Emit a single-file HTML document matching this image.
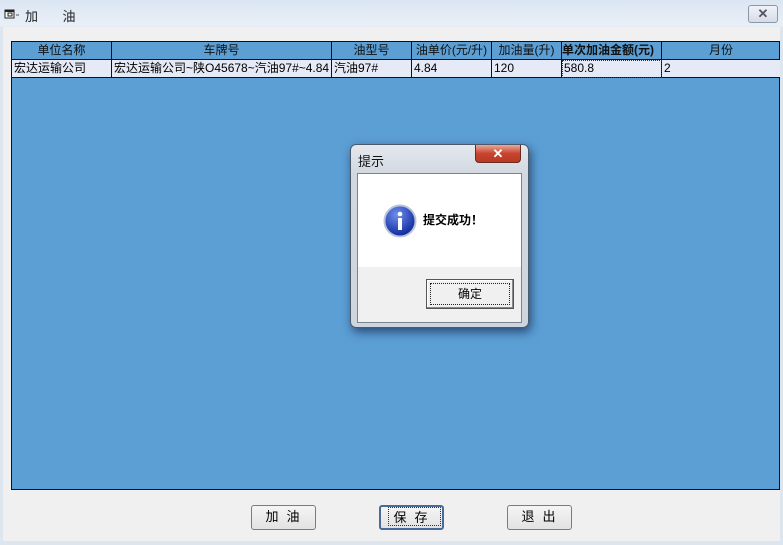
<!DOCTYPE html>
<html><head><meta charset="utf-8"><style>
*{margin:0;padding:0;box-sizing:border-box}
body{width:783px;height:545px;overflow:hidden;background:#f0f0f0;font-family:"Liberation Sans","Noto Sans CJK SC",sans-serif;font-size:12px;position:relative;color:#000}
.abs{position:absolute}
#title{left:0;top:0;width:783px;height:27px;background:linear-gradient(#dbe6f3,#e9eff7);border-bottom:1px solid #e6ebf1}
#grid{left:11px;top:41px;width:769px;height:449px;background:#5b9fd5;border:1px solid #111}
.hc{position:absolute;top:0;height:18px;line-height:17px;text-align:center;border-right:1px solid #111;border-bottom:1px solid #111;color:#111;font-size:12px}
.dc{position:absolute;top:18px;height:18px;line-height:17px;padding-left:2px;background:#e6eaf6;border-right:1px solid #111;border-bottom:1px solid #111;font-size:12px;white-space:nowrap;overflow:hidden}
.btn{position:absolute;top:505px;width:65px;height:25px;border:1px solid #6f7f8f;border-radius:3px;background:linear-gradient(#f5f5f5,#e2e2e2);text-align:center;line-height:22px;font-size:13px;letter-spacing:8px;padding-left:6px}
</style></head><body>
<div id="title" class="abs">
 <svg class="abs" style="left:4px;top:8px" width="18" height="14"><rect x="1" y="2" width="9" height="8" fill="#fff" stroke="#222"/><rect x="1" y="2" width="9" height="2" fill="#222"/><rect x="4" y="5" width="4" height="3" fill="none" stroke="#222"/><path d="M12 7h3" stroke="#555"/></svg>
 <div class="abs" style="left:25px;top:6px;font-size:13px;color:#222;letter-spacing:2px">加&nbsp;&nbsp;&nbsp;&nbsp;油</div>
 <div class="abs" style="left:748px;top:5px;width:30px;height:18px;border:1px solid #8a97a8;border-radius:3px;background:linear-gradient(#f0f3f8,#d6dde7);text-align:center;line-height:15px;color:#556;font-size:13px;font-weight:bold">✕</div>
</div>
<div class="abs" style="left:0;top:27px;width:3px;height:518px;background:#dde5ee"></div>
<div class="abs" style="left:780px;top:27px;width:3px;height:518px;background:#dde5ee"></div>
<div class="abs" style="left:0;top:541px;width:783px;height:4px;background:#dde5ee"></div>
<div id="grid" class="abs">
 <div class="hc" style="left:0;width:100px">单位名称</div>
 <div class="hc" style="left:100px;width:220px">车牌号</div>
 <div class="hc" style="left:320px;width:80px">油型号</div>
 <div class="hc" style="left:400px;width:80px">油单价(元/升)</div>
 <div class="hc" style="left:480px;width:70px">加油量(升)</div>
 <div class="hc" style="left:550px;width:100px;font-weight:bold;text-align:left;overflow:hidden;white-space:nowrap">单次加油金额(元)</div>
 <div class="hc" style="left:650px;width:118px;border-right:none">月份</div>
 <div class="dc" style="left:0;width:100px">宏达运输公司</div>
 <div class="dc" style="left:100px;width:220px">宏达运输公司~陕O45678~汽油97#~4.84</div>
 <div class="dc" style="left:320px;width:80px">汽油97#</div>
 <div class="dc" style="left:400px;width:80px">4.84</div>
 <div class="dc" style="left:480px;width:70px">120</div>
 <div class="dc" style="left:550px;width:100px;outline:1px dotted #333;outline-offset:-1px">580.8</div>
 <div class="dc" style="left:650px;width:118px;border-right:none">2</div>
</div>
<!-- dialog -->
<div class="abs" style="left:350px;top:144px;width:179px;height:184px;border:1px solid #4a5a6a;border-radius:6px;background:linear-gradient(#e4e8ee,#d2d8e0 30px,#cfd5dd);box-shadow:2px 4px 10px rgba(0,0,40,0.55)">
 <div class="abs" style="left:7px;top:6px;font-size:13px;color:#111">提示</div>
 <div class="abs" style="left:124px;top:0;width:46px;height:18px;border:1px solid #6b2a20;border-top:none;border-radius:0 0 4px 4px;background:linear-gradient(#e9a89a,#c8442e 50%,#b83a28);color:#fff;text-align:center;font-weight:bold;font-size:13px;line-height:17px">✕</div>
 <div class="abs" style="left:6px;top:28px;width:165px;height:150px;border:1px solid #7a8490;background:#f0f0f0">
  <div class="abs" style="left:0;top:0;width:163px;height:93px;background:#fff"></div>
  <svg class="abs" style="left:25px;top:30px" width="34" height="34"><defs><radialGradient id="g" cx="40%" cy="30%" r="70%"><stop offset="0" stop-color="#6f8ff0"/><stop offset="1" stop-color="#10289a"/></radialGradient></defs><circle cx="17" cy="17" r="15.5" fill="url(#g)" stroke="#b8c2d8" stroke-width="2"/><circle cx="17" cy="10" r="2.3" fill="#fff"/><rect x="15" y="14" width="4" height="12" fill="#fff"/></svg>
  <div class="abs" style="left:65px;top:37px;font-size:12px;font-weight:bold">提交成功！</div>
  <div class="abs" style="left:68px;top:105px;width:88px;height:30px;border:1px solid #555;background:#f0f0f0;box-shadow:inset -1px -1px #888,inset 1px 1px #fff">
   <div style="margin:3px;border:1px dotted #222;height:22px;text-align:center;line-height:20px">确定</div>
  </div>
 </div>
</div>
<div class="btn" style="left:251px">加油</div>
<div class="btn" style="left:379px;border:2px solid #4a6a9a;line-height:20px"><div style="border:1px dotted #333;height:19px;margin:0 1px">保存</div></div>
<div class="btn" style="left:507px">退出</div>
</body></html>
